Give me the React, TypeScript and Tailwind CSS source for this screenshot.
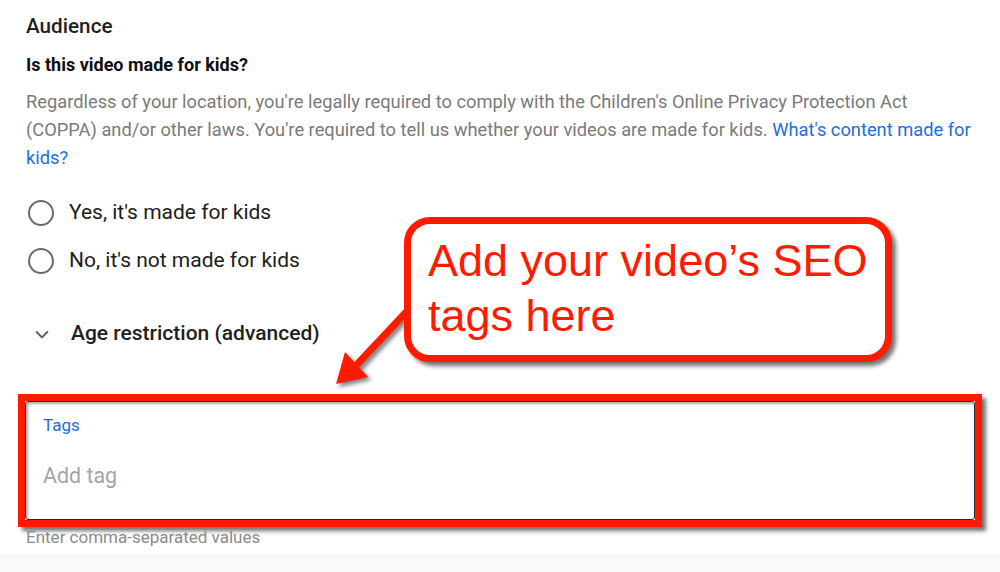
import React from "react";

function Radio({ label }: { label: string }) {
  return (
    <div className="flex items-center h-[48px]">
      <div className="w-[26px] h-[26px] rounded-full border-[2.5px] border-[#6b6b6b] ml-[2px]" />
      <span className="ml-[15px] text-[21px] text-[#202020]">{label}</span>
    </div>
  );
}

export default function App() {
  return (
    <div
      className="relative w-[1000px] h-[572px] bg-white overflow-hidden"
      style={{ fontFamily: "Roboto, 'Noto Sans', Arial, sans-serif" }}
    >
      <div className="pl-[26px] pr-[24px]">
        <div className="pt-[13px] text-[20.7px] leading-[26px] font-medium text-[#1f1f1f]">Audience</div>
        <div className="mt-[15px] text-[18px] leading-[22px] font-bold text-[#0f0f0f]">
          Is this video made for kids?
        </div>
        <p className="mt-[12px] text-[18.3px] leading-[28px] text-[#7a7a7a] w-[952px]">
          Regardless of your location, you're legally required to comply with the Children's Online Privacy
          Protection Act (COPPA) and/or other laws. You're required to tell us whether your videos are made for
          kids. <span className="text-[#1c6fd8]">What's content made for kids?</span>
        </p>
        <div className="mt-[17px]">
          <Radio label="Yes, it's made for kids" />
          <Radio label="No, it's not made for kids" />
        </div>
        <div className="mt-[25px] flex items-center h-[48px]">
          <svg width="20" height="20" viewBox="0 0 24 24" className="ml-[6px]">
            <path d="M5 9l7 7 7-7" fill="none" stroke="#606060" strokeWidth="2.4" />
          </svg>
          <span className="ml-[19px] text-[21px] font-medium text-[#202020]">Age restriction (advanced)</span>
        </div>
      </div>

      <div className="mt-[36px] ml-[18px] w-[964px] h-[133px] border-[7px] border-[#ff1a00] shadow-[4px_4px_4px_rgba(0,0,0,0.55)]">
        <div className="h-full border border-[#1d2a4a] rounded-[3px] shadow-[inset_2px_2px_3px_rgba(0,0,0,0.35)] pl-[17px]">
          <div className="pt-[12px] text-[17px] leading-[22px] text-[#1c6fd8]">Tags</div>
          <div className="mt-[27px] text-[21.4px] leading-[26px] text-[#a3a3a3]">Add tag</div>
        </div>
      </div>
      <div className="ml-[26px] mt-[0px] text-[17px] leading-[20px] text-[#8a8a8a]">Enter comma-separated values</div>
      <div className="mt-[7px] h-[30px] bg-[#f9f9f9]" />

      <svg
        className="absolute left-0 top-0 pointer-events-none"
        width="1000"
        height="572"
        style={{ filter: "drop-shadow(3px 3px 2px rgba(0,0,0,0.5))" }}
      >
        <line x1="410" y1="308" x2="348" y2="374" stroke="#ff1a00" strokeWidth="7" />
        <polygon points="336,384 345,352 368,377" fill="#ff1a00" />
      </svg>

      <div className="absolute left-[404px] top-[217px] w-[488px] h-[145px] rounded-[26px] border-[7px] border-[#ff1a00] bg-white shadow-[4px_4px_4px_rgba(0,0,0,0.55)] pl-[17px] pt-[9px]">
        <div
          className="text-[45px] leading-[55px] text-[#ff1a00]"
          style={{ fontFamily: "'Liberation Sans', Arial, sans-serif" }}
        >
          Add your video’s SEO
          <br />
          tags here
        </div>
      </div>
    </div>
  );
}
